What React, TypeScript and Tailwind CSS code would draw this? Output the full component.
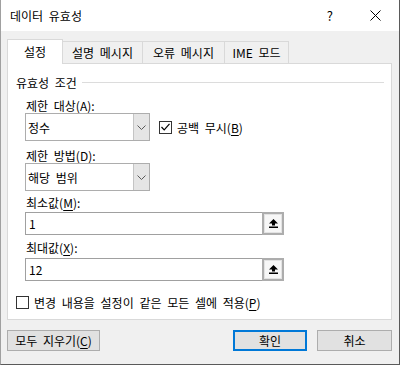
import React from 'react';

const Mn = ({ c }: { c: string }) => <span className="underline underline-offset-[2px]">{c}</span>;

const Chevron = () => (
  <svg width="9" height="5" viewBox="0 0 9 5">
    <path d="M0.5 0.5 L4.5 4.5 L8.5 0.5" fill="none" stroke="#5a5a5a" strokeWidth="1" />
  </svg>
);

const UpArrow = () => (
  <svg width="9" height="9" viewBox="0 0 9 9">
    <path d="M4.5 0 L9 4.5 H6 V6.5 H3 V4.5 H0 Z" fill="#000" />
    <rect x="0" y="7.5" width="9" height="1.5" fill="#000" />
  </svg>
);

const Check = ({ checked }: { checked?: boolean }) => (
  <div className="w-[13px] h-[13px] border border-[#333333] bg-white flex items-center justify-center shrink-0">
    {checked && (
      <svg width="9" height="8" viewBox="0 0 9 8">
        <path d="M0.5 4 L3.2 6.8 L8.5 0.8" fill="none" stroke="#000" strokeWidth="1.2" />
      </svg>
    )}
  </div>
);

const Combo = ({ value }: { value: string }) => (
  <div className="flex w-[125px] h-[28px] border border-[#adadad] bg-white shrink-0">
    <div className="flex-1 flex items-center pl-[2px]">{value}</div>
    <div className="w-[16px] flex items-center justify-center bg-[#e5e5e5] border-l border-[#c4c4c4]">
      <Chevron />
    </div>
  </div>
);

const NumInput = ({ value }: { value: string }) => (
  <div className="flex w-[259px] h-[23px]">
    <div className="flex-1 flex items-center pl-[3px] border-l border-t border-b border-[#a0a0a0] bg-white">{value}</div>
    <div className="w-[22px] h-full border-2 border-[#adadad] bg-[#e3e3e3] p-px">
      <div className="w-full h-full bg-[#f7f7f7] flex items-center justify-center">
        <UpArrow />
      </div>
    </div>
  </div>
);

const Label = ({ children, cls }: { children: React.ReactNode; cls: string }) => (
  <div className={`h-[15px] pl-[1px] flex items-center ${cls}`}>{children}</div>
);

export default function App() {
  const tabs = [
    { t: '설명 메시지', w: 'w-[81px]' },
    { t: '오류 메시지', w: 'w-[83px]' },
    { t: 'IME 모드', w: 'w-[65px]' },
  ];
  return (
    <div className="w-[400px] h-[365px] flex flex-col bg-[#f0f0f0] border-l border-r border-b border-l-[#a0a0a0] border-r-[#5a5a5a] border-b-[#5a5a5a] text-[12px] leading-[15px] [word-spacing:3px] text-black font-['Noto_Sans_CJK_KR','Liberation_Sans',sans-serif]">
      {/* title bar */}
      <div className="h-[31px] shrink-0 bg-white flex items-center pl-[9px]">
        <span>데이터 유효성</span>
        <span className="ml-auto text-[13px]">?</span>
        <svg className="ml-[37px] mr-[18px]" width="11" height="11" viewBox="0 0 11 11">
          <path d="M0.5 0.5 L10.5 10.5 M10.5 0.5 L0.5 10.5" stroke="#000" strokeWidth="1" />
        </svg>
      </div>

      <div className="ml-[6px] mr-[7px] flex flex-col">
        {/* tabs */}
        <div className="mt-[8px] h-[24px] flex items-end">
          <div className="relative z-10 w-[56px] h-[25px] -mb-px bg-white border-l border-t border-r border-[#d9d9d9] flex items-center justify-center pb-[2px]">
            설정
          </div>
          {tabs.map((tab) => (
            <div
              key={tab.t}
              className={`${tab.w} h-[22px] -ml-px border-l border-t border-r border-[#d9d9d9] flex items-center justify-center`}
            >
              {tab.t}
            </div>
          ))}
        </div>

        {/* panel */}
        <div className="w-[385px] h-[257px] border border-[#d9d9d9] bg-white flex flex-col">
          <div className="mt-[10px] h-[16px] flex items-center pl-[8px] pr-[7px]">
            <span>유효성 조건</span>
            <div className="flex-1 h-px bg-[#dcdcdc] ml-[5px]" />
          </div>

          <div className="pl-[17px] flex flex-col">
            <Label cls="mt-[8px]">
              제한 대상(<Mn c="A" />):
            </Label>
            <div className="flex items-center">
              <Combo value="정수" />
              <div className="ml-[9px] flex items-center gap-[5px]">
                <Check checked />
                <span>
                  공백 무시(<Mn c="B" />)
                </span>
              </div>
            </div>

            <Label cls="mt-[7px]">
              제한 방법(<Mn c="D" />):
            </Label>
            <Combo value="해당 범위" />

            <Label cls="mt-[4px] mb-[2px]">
              최소값(<Mn c="M" />):
            </Label>
            <NumInput value="1" />

            <Label cls="mt-[5px] mb-[3px]">
              최대값(<Mn c="X" />):
            </Label>
            <NumInput value="12" />
          </div>

          <div className="mt-[14px] h-[15px] pl-[8px] flex items-center gap-[5px]">
            <Check />
            <span>
              변경 내용을 설정이 같은 모든 셀에 적용(<Mn c="P" />)
            </span>
          </div>
        </div>

        {/* buttons */}
        <div className="mt-[10px] h-[21px] flex">
          <div className="w-[93px] h-full bg-[#e1e1e1] border border-[#adadad] flex items-center justify-center">
            모두 지우기(<Mn c="C" />)
          </div>
          <div className="ml-auto w-[74px] h-full bg-[#e1e1e1] border-2 border-[#0078d7] flex items-center justify-center">
            확인
          </div>
          <div className="ml-[10px] w-[75px] h-full bg-[#e1e1e1] border border-[#adadad] flex items-center justify-center">
            취소
          </div>
        </div>
      </div>
    </div>
  );
}
